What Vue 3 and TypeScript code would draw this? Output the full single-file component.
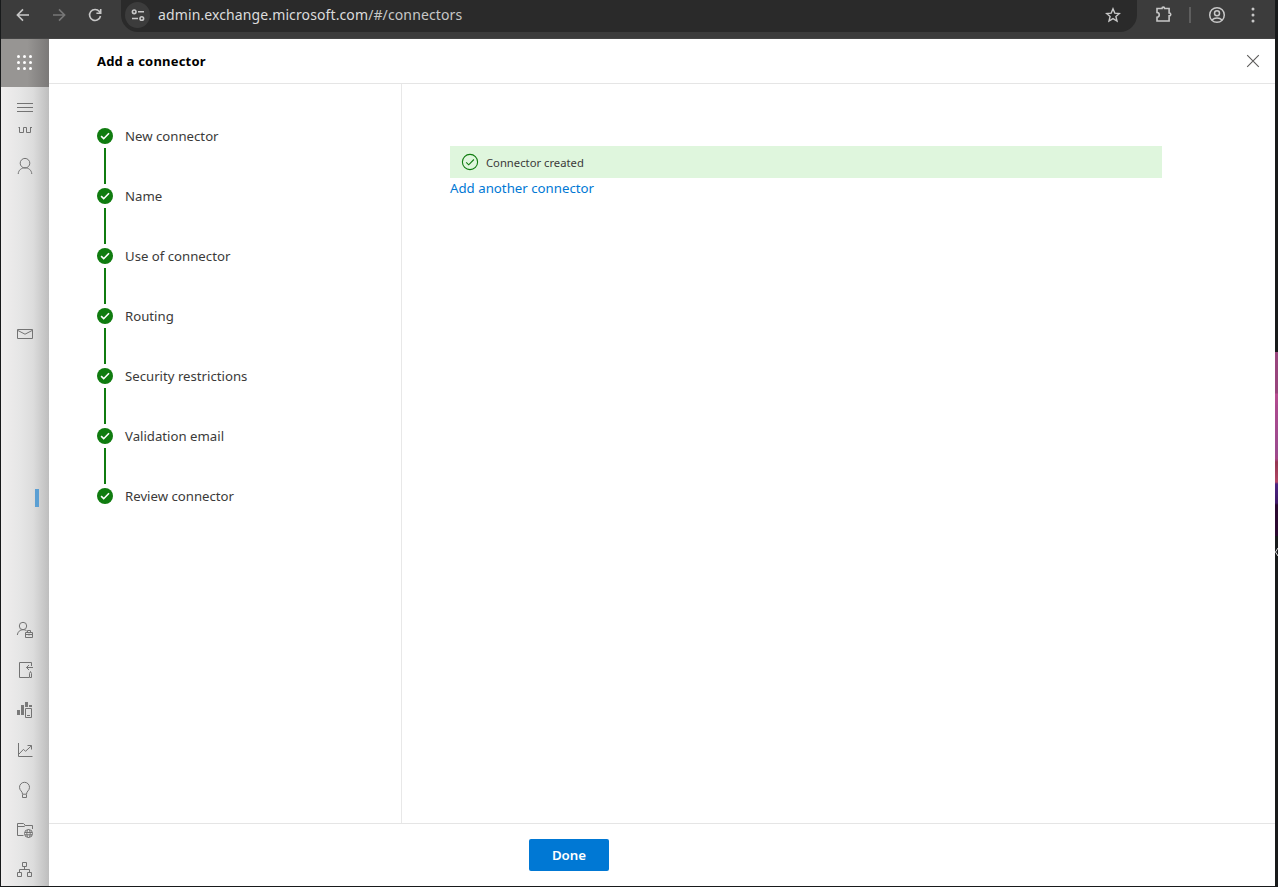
<script setup lang="ts">
const steps: string[] = [
  'New connector',
  'Name',
  'Use of connector',
  'Routing',
  'Security restrictions',
  'Validation email',
  'Review connector',
]
const dots: number[] = [2.5, 8.5, 14.5]
</script>

<template>
  <div class="screen">
    <div class="window">
      <header class="toolbar">
        <svg class="tool back" width="16" height="16" viewBox="0 0 16 16"><path d="M14 8H2.5M8 2.4L2.4 8L8 13.6" /></svg>
        <svg class="tool forward" width="16" height="16" viewBox="0 0 16 16"><path d="M2 8H13.5M8 2.4L13.6 8L8 13.6" /></svg>
        <svg class="tool reload" width="16" height="16" viewBox="0 0 16 16"><path d="M13.5 9A5.5 5.5 0 1 1 12.4 4.5L13.6 6M13.7 2V6.2H9.4" /></svg>
        <div class="address">
          <span class="site-info">
            <svg class="tool" width="14" height="14" viewBox="0 0 14 14"><circle cx="3.2" cy="3.8" r="1.8" /><path d="M7 3.8H13M1 10.5H7" /><circle cx="10.8" cy="10.5" r="1.8" /></svg>
          </span>
          <span class="url">admin.exchange.microsoft.com<span class="url-path">/#/connectors</span></span>
          <svg class="tool star" width="16" height="16" viewBox="0 0 16 16"><path d="M8 1.8L9.8 6.1L14.4 6.5L10.9 9.5L12 14L8 11.6L4 14L5.1 9.5L1.6 6.5L6.2 6.1Z" /></svg>
        </div>
        <svg class="tool puzzle" width="18" height="18" viewBox="0 0 18 18"><path d="M2 3.5H7C7 1.6 9.6 1.6 9.6 3.5H14.1V8C16.3 8 16.3 10.8 14.1 10.8V16H2V12.2C5 12.2 5 7.5 2 7.5Z" /></svg>
        <span class="separator"></span>
        <svg class="tool profile" width="18" height="18" viewBox="0 0 18 18"><circle cx="9" cy="9" r="7.3" /><circle cx="9" cy="7.3" r="2.5" /><path d="M3.8 14C6.8 11.4 11.2 11.4 14.2 14" /></svg>
        <svg class="kebab" width="4" height="16" viewBox="0 0 4 16"><circle v-for="y in dots" :key="y" cx="2" :cy="y - 0.5" r="1.5" /></svg>
      </header>

      <div class="body">
        <aside class="rail">
          <div class="waffle">
            <svg width="16" height="16" viewBox="0 0 16 16">
              <template v-for="y in dots" :key="y"><circle v-for="x in dots" :key="x" :cx="x - 1" :cy="y - 1" r="1.5" /></template>
            </svg>
          </div>
          <nav class="icons">
            <svg class="menu" width="18" height="18" viewBox="0 0 18 18"><path d="M1 4.5H17M1 8.5H17M1 12.5H17" /></svg>
            <svg class="home" width="18" height="7" viewBox="0 0 18 7"><path d="M3.5 0V5.5H7.5V.5H10.5V5.5H14.5V0M2.5 .5H4M14 .5H16" /></svg>
            <svg class="person" width="18" height="18" viewBox="0 0 18 18"><circle cx="9" cy="6.2" r="4.8" /><path d="M2.2 17C2.7 8.7 15.3 8.7 15.8 17" /></svg>
            <svg class="mail" width="18" height="18" viewBox="0 0 18 18"><path d="M1.5 4.5H16.5V13.5H1.5ZM1.5 5.3L9 9.2L16.5 5.3" /></svg>
            <span class="marker"></span>
            <svg class="roles" width="18" height="18" viewBox="0 0 18 18"><circle cx="7" cy="5" r="3.7" /><path d="M1.3 14C1.7 10.8 4 8.7 7 8.7C8.8 8.7 9.8 9.2 10.7 10M9.5 11.5H16.5V16.5H9.5ZM11.5 11.3V9.5H14.5V11.3M9.5 13.5H16.5M13 12.7V14.5" /></svg>
            <svg width="18" height="18" viewBox="0 0 18 18"><path d="M15.5 5V1.5H3.5V16.5H13M10.5 6.5H17M13 4L10.5 6.5L13 9M13.5 16.5V12.5L14.5 10.5L15.5 12.5V16.5Z" /></svg>
            <svg width="18" height="18" viewBox="0 0 18 18"><path class="solid" d="M1 9H4V14H1ZM5 4H8V14H5ZM9 1H12V6H9ZM13 4H16V6H13Z" /><path d="M9.5 7.5H15.5V16.5H9.5ZM11 14.5H14" /></svg>
            <svg width="18" height="18" viewBox="0 0 18 18"><path d="M2.5 2V15.5H16.5M3 13L7.5 8.3L9.5 10.3L15.2 5M11.5 4.5H15.5V8.5" /></svg>
            <svg width="18" height="18" viewBox="0 0 18 18"><path d="M6.5 13.2C6.5 10 3.5 9.8 3.5 6.3A5 5 0 0 1 13.5 6.3C13.5 9.8 10.5 10 10.5 13.2ZM6.5 13.5V16.5H10.5V13.5" /></svg>
            <svg width="18" height="18" viewBox="0 0 18 18"><path d="M7.5 14.5H1.5V2.5H7.5L9.5 4.5H16.5V8M1.5 5.5H8L9.5 4.5" /><circle cx="12.5" cy="12.5" r="4" /><ellipse cx="12.5" cy="12.5" rx="1.7" ry="4" /><path d="M8.7 11.5H16.3M8.7 13.8H16.3" /></svg>
            <svg width="18" height="18" viewBox="0 0 18 18"><path d="M6.5 1.5H10.5V5.5H6.5ZM8.5 5.5V8.5M3.5 11.5V8.5H13.5V11.5M1.5 11.5H5.5V15.5H1.5ZM11.5 11.5H15.5V15.5H11.5Z" /></svg>
          </nav>
        </aside>

        <main class="panel">
          <div class="panel-header">
            <h1>Add a connector</h1>
            <svg class="close" width="14" height="14" viewBox="0 0 14 14"><path d="M1.2 1.2L12.8 12.8M12.8 1.2L1.2 12.8" /></svg>
          </div>
          <div class="panel-body">
            <ol class="steps">
              <li v-for="step in steps" :key="step">
                <svg width="16" height="16" viewBox="0 0 16 16"><circle cx="8" cy="8" r="8" /><path d="M4.1 8.2L6.7 10.7L12 5.3" /></svg>
                <span>{{ step }}</span>
              </li>
            </ol>
            <section class="content">
              <div class="message">
                <svg width="18" height="18" viewBox="0 0 18 18"><circle cx="9" cy="9" r="7.6" /><path d="M5.2 9.3L7.7 11.8L12.9 6.5" /></svg>
                <span>Connector created</span>
              </div>
              <a class="link">Add another connector</a>
            </section>
          </div>
          <footer><button type="button">Done</button></footer>
        </main>
      </div>
    </div>
    <div class="desktop">
      <span class="wallpaper"></span>
      <svg width="3" height="10" viewBox="0 0 3 10"><path d="M3 1L.5 5L3 9" /></svg>
    </div>
  </div>
</template>

<style>
body { margin: 0; overflow: hidden; }
</style>

<style scoped>
* { box-sizing: border-box; }
svg { display: block; flex: none; fill: none; }
.screen { display: flex; width: 1278px; height: 887px; background: #181a1b; font-family: "Noto Sans", sans-serif; padding: 0 0 1px 1px; overflow: hidden; }
.window { width: 1274px; display: flex; flex-direction: column; }
.toolbar { height: 39px; background: #3c3c3c; display: flex; align-items: flex-start; flex: none; padding-left: 14px; border-bottom: 1px solid #454545; }
.tool { stroke: #c7c7c7; stroke-width: 1.6; }
.back, .forward, .reload { margin-top: 7px; }
.forward { margin-left: 20px; stroke: #777; }
.reload { margin-left: 20px; }
.address { width: 1016px; height: 32px; margin-left: 18px; background: #2a2a2a; border-radius: 0 0 17px 17px; display: flex; align-items: center; padding: 0 16px 2px 4px; }
.site-info { width: 25px; height: 26px; border-radius: 50%; background: #3c3c3c; display: grid; place-items: center; }
.url { margin-left: 8px; padding-bottom: 2px; font-size: 14px; letter-spacing: 0.115px; color: #dcdcdc; flex: 1; white-space: nowrap; }
.url-path { color: #c7c7c7; }
.star { stroke-width: 1.4; }
.puzzle { margin: 5px 0 0 18px; }
.separator { width: 2px; height: 16px; margin: 7px 0 0 16px; background: #5e5e5e; }
.profile { margin: 6px 0 0 17px; stroke-width: 1.5; }
.kebab { margin: 7px 0 0 25px; fill: #c7c7c7; }
.body { flex: 1; display: flex; min-height: 0; }
.rail { width: 48px; background: linear-gradient(90deg, #f0eeee 0, #e6e6e6 40%, #dcdcdc 67%, #bebebe 100%); }
.waffle { height: 48px; background: linear-gradient(90deg, #979593 55%, #7b7978); padding: 16px; }
.waffle circle { fill: #fff; }
.icons { display: flex; flex-direction: column; padding-left: 15px; gap: 22px; }
.icons svg { stroke: #737373; stroke-width: 1; }
.icons .menu { margin-top: 12px; }
.icons .home { margin-top: -12px; }
.icons .person { margin-top: 1px; }
.icons .mail { margin-top: 128px; }
.icons .solid { fill: #797979; stroke: none; }
.marker { width: 4px; height: 18px; margin: 124px 0 0 19px; background: #5b9fd3; }
.icons .roles { margin-top: 92px; }
.panel { flex: 1; background: #fff; display: flex; flex-direction: column; color: #3b3a39; }
.panel-header { height: 45px; display: flex; justify-content: space-between; align-items: center; padding: 0 15px 0 48px; border-bottom: 1px solid #e5e5e5; }
h1 { font-size: 13px; line-height: 20px; letter-spacing: 0.2px; font-weight: 700; color: #000; margin: 0; }
.close { stroke: #5c5b5a; stroke-width: 1.1; }
.panel-body { flex: 1; display: flex; min-height: 0; }
.steps { width: 353px; margin: 0; padding: 44px 0 0 48px; border-right: 1px solid #e8e8e8; list-style: none; }
.steps li { position: relative; display: flex; align-items: center; gap: 12px; height: 16px; margin-bottom: 44px; font-size: 13.2px; white-space: nowrap; }
.steps li:not(:last-child)::after { content: ""; position: absolute; left: 7px; top: 20px; width: 2px; height: 36px; background: #107c10; }
.steps circle { fill: #107c10; }
.steps path { stroke: #fff; stroke-width: 1.6; }
.content { padding: 62px 0 0 48px; }
.message { width: 712px; height: 32px; display: flex; align-items: center; gap: 7px; padding-left: 11px; background: #dff6dd; font-size: 11.25px; }
.message svg { stroke: #107c10; stroke-width: 1.1; }
.link { display: block; font-size: 13.25px; line-height: 20px; color: #0078d4; }
footer { height: 63px; border-top: 1px solid #e5e5e5; padding: 15px 0 0 480px; }
button { display: block; width: 80px; height: 32px; padding: 0 0 1px; border: 0; border-radius: 2px; background: #0078d4; color: #fff; font: 600 13.3px "Noto Sans", sans-serif; }
.desktop { width: 3px; }
.wallpaper { display: block; height: 184px; margin: 352px 0 11px; background: linear-gradient(#98457c 0, #98457c 41px, #ba4c91 42px, #ac4a8e 54px, #9b4b8e 100px, #a64687 107px, #943651 110px, #b24665 130px, #4d2582 132px, #3f1968 151px, #2b0930 153px, #2b0930 100%); }
.desktop svg { stroke: #ddd; stroke-width: 1; }
</style>
